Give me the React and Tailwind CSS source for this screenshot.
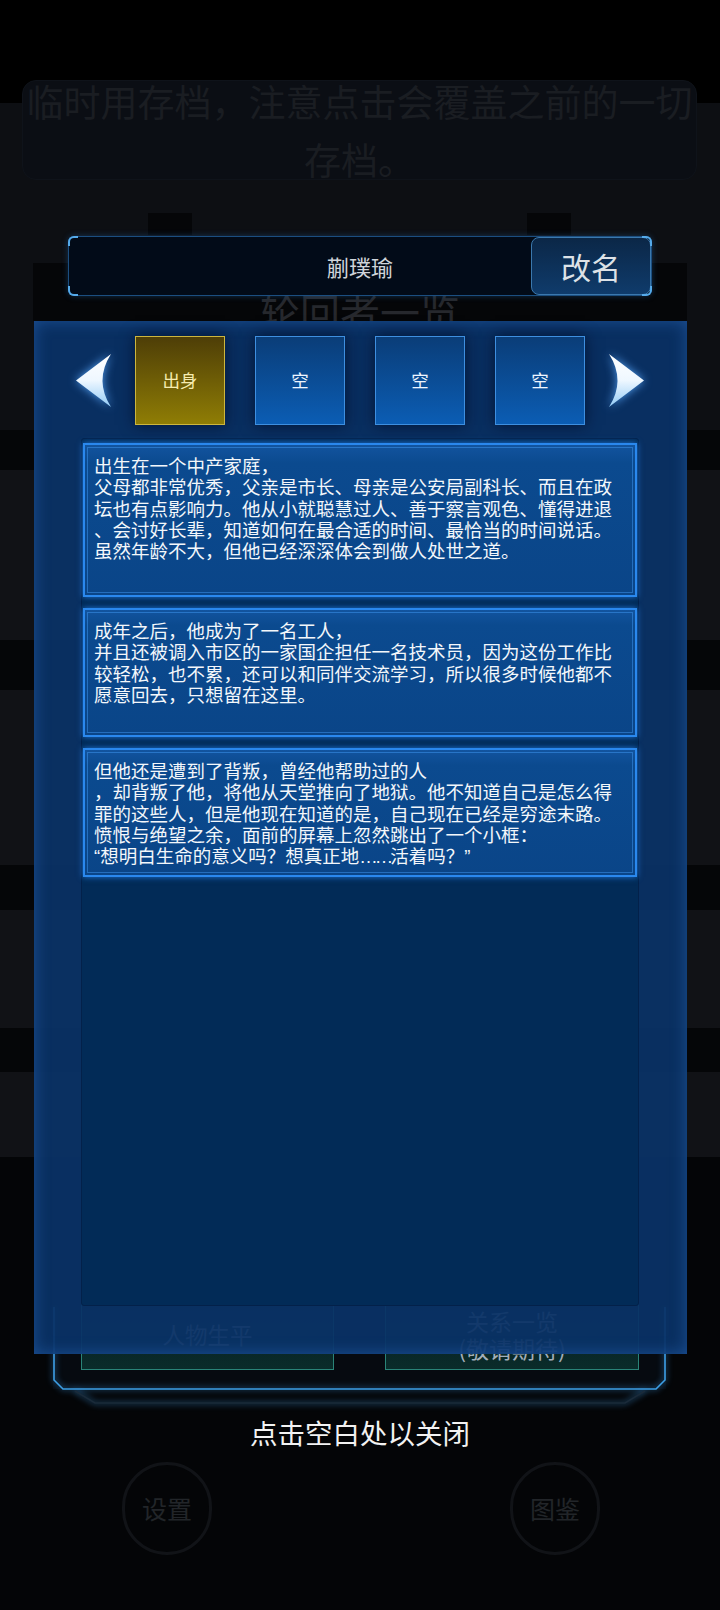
import React from "react";

const TABS = [
    { id: "birth", name: "出身", active: true },
    { id: "slot1", name: "空" },
    { id: "slot2", name: "空" },
    { id: "slot3", name: "空" },
];

const LATIN = "font-['Liberation_Sans',sans-serif]";

const CARDS = [
    {
        id: "c1",
        h: "h-[154px]",
        lines: [
            "出生在一个中产家庭，",
            "父母都非常优秀，父亲是市长、母亲是公安局副科长、而且在政",
            "坛也有点影响力。他从小就聪慧过人、善于察言观色、懂得进退",
            "、会讨好长辈，知道如何在最合适的时间、最恰当的时间说话。",
            "虽然年龄不大，但他已经深深体会到做人处世之道。",
        ],
    },
    {
        id: "c2",
        h: "h-[129px]",
        lines: [
            "成年之后，他成为了一名工人，",
            "并且还被调入市区的一家国企担任一名技术员，因为这份工作比",
            "较轻松，也不累，还可以和同伴交流学习，所以很多时候他都不",
            "愿意回去，只想留在这里。",
        ],
    },
    {
        id: "c3",
        h: "h-[129px]",
        lines: [
            "但他还是遭到了背叛，曾经他帮助过的人",
            "，却背叛了他，将他从天堂推向了地狱。他不知道自己是怎么得",
            "罪的这些人，但是他现在知道的是，自己现在已经是穷途末路。",
            "愤恨与绝望之余，面前的屏幕上忽然跳出了一个小框：",
            <>
                <span className={LATIN}>“</span>想明白生命的意义吗？想真正地
                <span className={`${LATIN} tracking-[-3px]`}>……</span>活着吗？
                <span className={LATIN}>”</span>
            </>,
        ],
    },
];

const Arrow = ({ dir }) => (
    <svg
        width="35"
        height="53"
        viewBox="0 0 35 53"
        className="drop-shadow-[0_0_5px_rgba(90,170,255,0.9)]"
    >
        <defs>
            <linearGradient id={`arrow-${dir}`} x1="0" y1="0" x2="0" y2="1">
                <stop offset="0" stopColor="#ffffff" />
                <stop offset="0.5" stopColor="#eef7ff" />
                <stop offset="1" stopColor="#93cbf6" />
            </linearGradient>
        </defs>
        <path
            d={dir === "left" ? "M0 26.5L35 0Q18 26.5 35 53Z" : "M35 26.5L0 0Q17 26.5 0 53Z"}
            fill={`url(#arrow-${dir})`}
        />
    </svg>
);

const Corner = ({ className }) => (
    <div className={`pointer-events-none absolute h-[10px] w-[10px] border-[#55aaea] ${className}`} />
);

const App = () => {
    return (
        <div className="relative h-[1610px] w-[720px] overflow-hidden bg-black font-['Noto_Sans_CJK_SC',sans-serif]">
            {/* dimmed page behind the dialog */}
            <div className="flex flex-col">
                <div className="h-[103px] bg-black" />
                <div className="h-[327px] overflow-hidden bg-[#0d0f13] pt-[110px]">
                    <div className="flex gap-[335px] pl-[148px]">
                        <div className="h-[22px] w-[44px] bg-[#050608]" />
                        <div className="h-[22px] w-[44px] bg-[#050608]" />
                    </div>
                    <div className="ml-[33px] mt-[28px] flex h-[58px] w-[654px] justify-center overflow-hidden bg-[#050608] pt-[28px]">
                        <span className="text-[40px] leading-[40px] text-[#26282d]">轮回者一览</span>
                    </div>
                </div>
                <div className="h-[40px] bg-[#050608]" />
                <div className="h-[170px] bg-[#111216]" />
                <div className="h-[50px] bg-[#050608]" />
                <div className="h-[175px] bg-[#111216]" />
                <div className="h-[45px] bg-[#050608]" />
                <div className="h-[118px] bg-[#111216]" />
                <div className="h-[44px] bg-[#050608]" />
                <div className="h-[85px] bg-[#111216]" />
                <div className="h-[453px] bg-[#040507]">
                    <div className="relative ml-[53px] h-[232px] w-[613px] bg-[#060a10]">
                        <div className="flex gap-[51px] pl-[28px] pt-[143px]">
                            <div className="flex h-[70px] w-[253px] items-center justify-center border border-[#2a8478] bg-[linear-gradient(180deg,#071a1e,#0a2c2a)] text-[22.5px] text-[#a3afbb]">
                                人物生平
                            </div>
                            <div className="flex h-[70px] w-[254px] flex-col items-center justify-center border border-[#2a8478] bg-[linear-gradient(180deg,#071a1e,#0a2c2a)] text-[23px] leading-[27px] text-[#a3afbb]">
                                <span>关系一览</span>
                                <span>(敬请期待)</span>
                            </div>
                        </div>
                        <svg
                            width="613"
                            height="250"
                            viewBox="0 0 613 250"
                            className="absolute left-0 top-0 overflow-visible drop-shadow-[0_0_3px_rgba(60,160,240,0.9)]"
                        >
                            <polyline
                                points="1,150 1,223 10,232 603,232 612,223 612,150"
                                fill="none"
                                stroke="#3d9fe6"
                                strokeWidth="1.6"
                            />
                            <polyline
                                points="22,234 42,246 572,246 592,234"
                                fill="none"
                                stroke="#1b2b3a"
                                strokeWidth="1.5"
                            />
                        </svg>
                    </div>
                    <div className="mt-[73px] flex gap-[298px] pl-[122px]">
                        <div className="flex h-[93px] w-[90px] items-center justify-center rounded-full border-[3px] border-[#111317] text-[25px] text-[#222529]">
                            设置
                        </div>
                        <div className="flex h-[93px] w-[90px] items-center justify-center rounded-full border-[3px] border-[#111317] text-[25px] text-[#222529]">
                            图鉴
                        </div>
                    </div>
                </div>
            </div>

            {/* toast over the page */}
            <div className="absolute left-[22px] right-[23px] top-[80px] h-[100px] rounded-[14px] border border-[#0f131a] bg-[#0b0e14]">
                <p className="-mt-[9px] text-center text-[37px] leading-[58px] text-[#1a1d22]">
                    临时用存档，注意点击会覆盖之前的一切
                    <br />
                    存档。
                </p>
            </div>

            {/* dialog */}
            <div className="absolute inset-0 flex flex-col items-center pt-[236px]">
                <div className="relative grid h-[60px] w-[584px] grid-cols-[120px_1fr_120px] items-center rounded-[6px] border border-[#1b4e80] bg-[#020b18] shadow-[0_0_6px_rgba(40,120,200,0.35)]">
                    <Corner className="-left-px -top-px rounded-tl-[6px] border-l-2 border-t-2" />
                    <Corner className="-bottom-px -left-px rounded-bl-[6px] border-b-2 border-l-2" />
                    <Corner className="-right-px -top-px rounded-tr-[6px] border-r-2 border-t-2" />
                    <Corner className="-bottom-px -right-px rounded-br-[6px] border-b-2 border-r-2" />
                    <div />
                    <div className="text-center text-[22px] text-[#cfd4da]">蒯璞瑜</div>
                    <button
                        type="button"
                        className="h-[58px] rounded-[8px] border border-[#3b78ad] bg-[linear-gradient(180deg,#0b2747,#0f3b6b)] text-[30px] text-[#dde2e7]"
                    >
                        改名
                    </button>
                </div>

                <div className="mt-[25px] flex h-[1033px] w-[653px] flex-col items-center bg-[rgba(10,50,102,0.94)] shadow-[inset_0_0_16px_rgba(50,120,210,0.45)]">
                    <div className="mt-[15px] flex items-center">
                        <Arrow dir="left" />
                        <div className="ml-[24px] flex gap-[30px]">
                            {TABS.map((tab) => (
                                <div
                                    key={tab.id}
                                    className={`flex h-[89px] w-[90px] items-center justify-center border text-[17.5px] shadow-[0_0_14px_rgba(0,12,40,0.8)] ${
                                        tab.active
                                            ? "border-[#cdb63e] bg-[linear-gradient(180deg,#4e3e07,#8f7d05)] text-[#f6ecb0]"
                                            : "border-[#3e8fe0] bg-[linear-gradient(180deg,#0a3d78,#0b5db4)] text-[#eef5ff]"
                                    }`}
                                >
                                    {tab.name}
                                </div>
                            ))}
                        </div>
                        <div className="ml-[24px] flex">
                            <Arrow dir="right" />
                        </div>
                    </div>

                    <div className="mt-[13px] flex h-[868px] w-[558px] flex-col gap-[11px] rounded-[3px] border border-[#03214a] bg-[#022b57] px-px pt-[4px]">
                        {CARDS.map((card) => (
                            <div
                                key={card.id}
                                className={`relative ${card.h} shrink-0 border-2 border-[#2a88ee] bg-[linear-gradient(180deg,#12549f_0%,#0b4a8f_12%,#0a4588_100%)] pl-[9px] pt-[10px] text-[18.5px] leading-[21.3px] text-[#f3f7fb] shadow-[0_0_6px_rgba(40,140,255,0.75)]`}
                            >
                                <div className="pointer-events-none absolute inset-[2px] border border-[#3f98f2]/50" />
                                {card.lines.map((line, i) => (
                                    <div key={i} className="relative whitespace-nowrap">
                                        {line}
                                    </div>
                                ))}
                            </div>
                        ))}
                    </div>
                </div>

                <p className="mt-[61px] text-[27.5px] leading-[34px] text-[#f2f2f2]">点击空白处以关闭</p>
            </div>
        </div>
    );
};

export default App;
